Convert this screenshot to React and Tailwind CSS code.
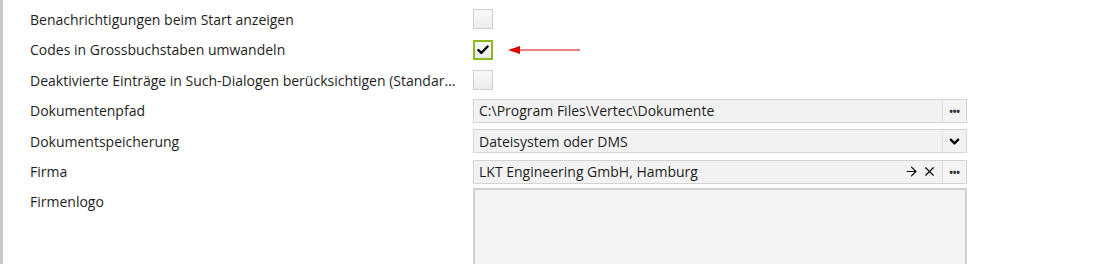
import { Check, ChevronDown, ArrowRight, X } from 'lucide-react'

function Checkbox({ checked }) {
  return (
    <div
      className={`w-5 h-5 flex items-center justify-center bg-gradient-to-b from-[#f9f9f9] to-[#ececec] ${
        checked ? 'border-2 border-[#8cba1e]' : 'border border-[#cfcfcf]'
      }`}
    >
      {checked && <Check size={14} strokeWidth={4} className="text-black" />}
    </div>
  )
}

function Field({ value, children }) {
  return (
    <div className="flex items-center h-6 w-[494px] border border-[#d4d4d4] bg-[#f2f2f2]">
      <span className="flex-1 pl-[5px] truncate">{value}</span>
      {children}
    </div>
  )
}

function DotsButton() {
  return (
    <div className="w-6 h-full flex items-center justify-center border-l border-[#e0e0e0] bg-[#f4f4f4] text-[10px] font-bold tracking-tight leading-none text-[#333]">
      •••
    </div>
  )
}

function Row({ label, children }) {
  return (
    <div className="flex items-center h-[30.5px] shrink-0">
      <div className="w-[470px] shrink-0 pl-[27px] pr-[10px] truncate">{label}</div>
      {children}
    </div>
  )
}

export default function App() {
  return (
    <div
      className="h-[264px] w-[1093px] bg-white flex overflow-hidden text-[14px] text-[#1e1e1e]"
      style={{ fontFamily: '"Open Sans", "Noto Sans", sans-serif' }}
    >
      <div className="w-[3px] shrink-0 bg-[#c8c8c8]" />
      <div className="flex flex-col pt-[4px]">
        <Row label="Benachrichtigungen beim Start anzeigen">
          <Checkbox />
        </Row>
        <Row label="Codes in Grossbuchstaben umwandeln">
          <Checkbox checked />
          <div className="flex items-center ml-[15px]">
            <svg width="72" height="10" viewBox="0 0 72 10">
              <polygon points="0,5 12,1 12,9" fill="#e00000" />
              <line x1="10" y1="5" x2="72" y2="5" stroke="#e00000" strokeWidth="1.2" />
            </svg>
          </div>
        </Row>
        <Row label="Deaktivierte Einträge in Such-Dialogen berücksichtigen (Standardwert)">
          <Checkbox />
        </Row>
        <Row label="Dokumentenpfad">
          <Field value="C:\Program Files\Vertec\Dokumente">
            <DotsButton />
          </Field>
        </Row>
        <Row label="Dokumentspeicherung">
          <Field value="Dateisystem oder DMS">
            <div className="w-6 h-full flex items-center justify-center border-l border-[#e0e0e0]">
              <ChevronDown size={15} strokeWidth={3.5} className="text-black" />
            </div>
          </Field>
        </Row>
        <Row label="Firma">
          <Field value="LKT Engineering GmbH, Hamburg">
            <ArrowRight size={15} strokeWidth={1.8} className="text-black mr-[3px]" />
            <X size={15} strokeWidth={1.8} className="text-black mr-[5px]" />
            <DotsButton />
          </Field>
        </Row>
        <div className="flex items-start mt-[1px] shrink-0">
          <div className="w-[470px] shrink-0 pl-[27px] pr-[10px] pt-[3px] truncate">Firmenlogo</div>
          <div className="w-[494px] h-[90px] border-2 border-[#d0d0d0] bg-[#f3f3f3]" />
        </div>
      </div>
    </div>
  )
}
